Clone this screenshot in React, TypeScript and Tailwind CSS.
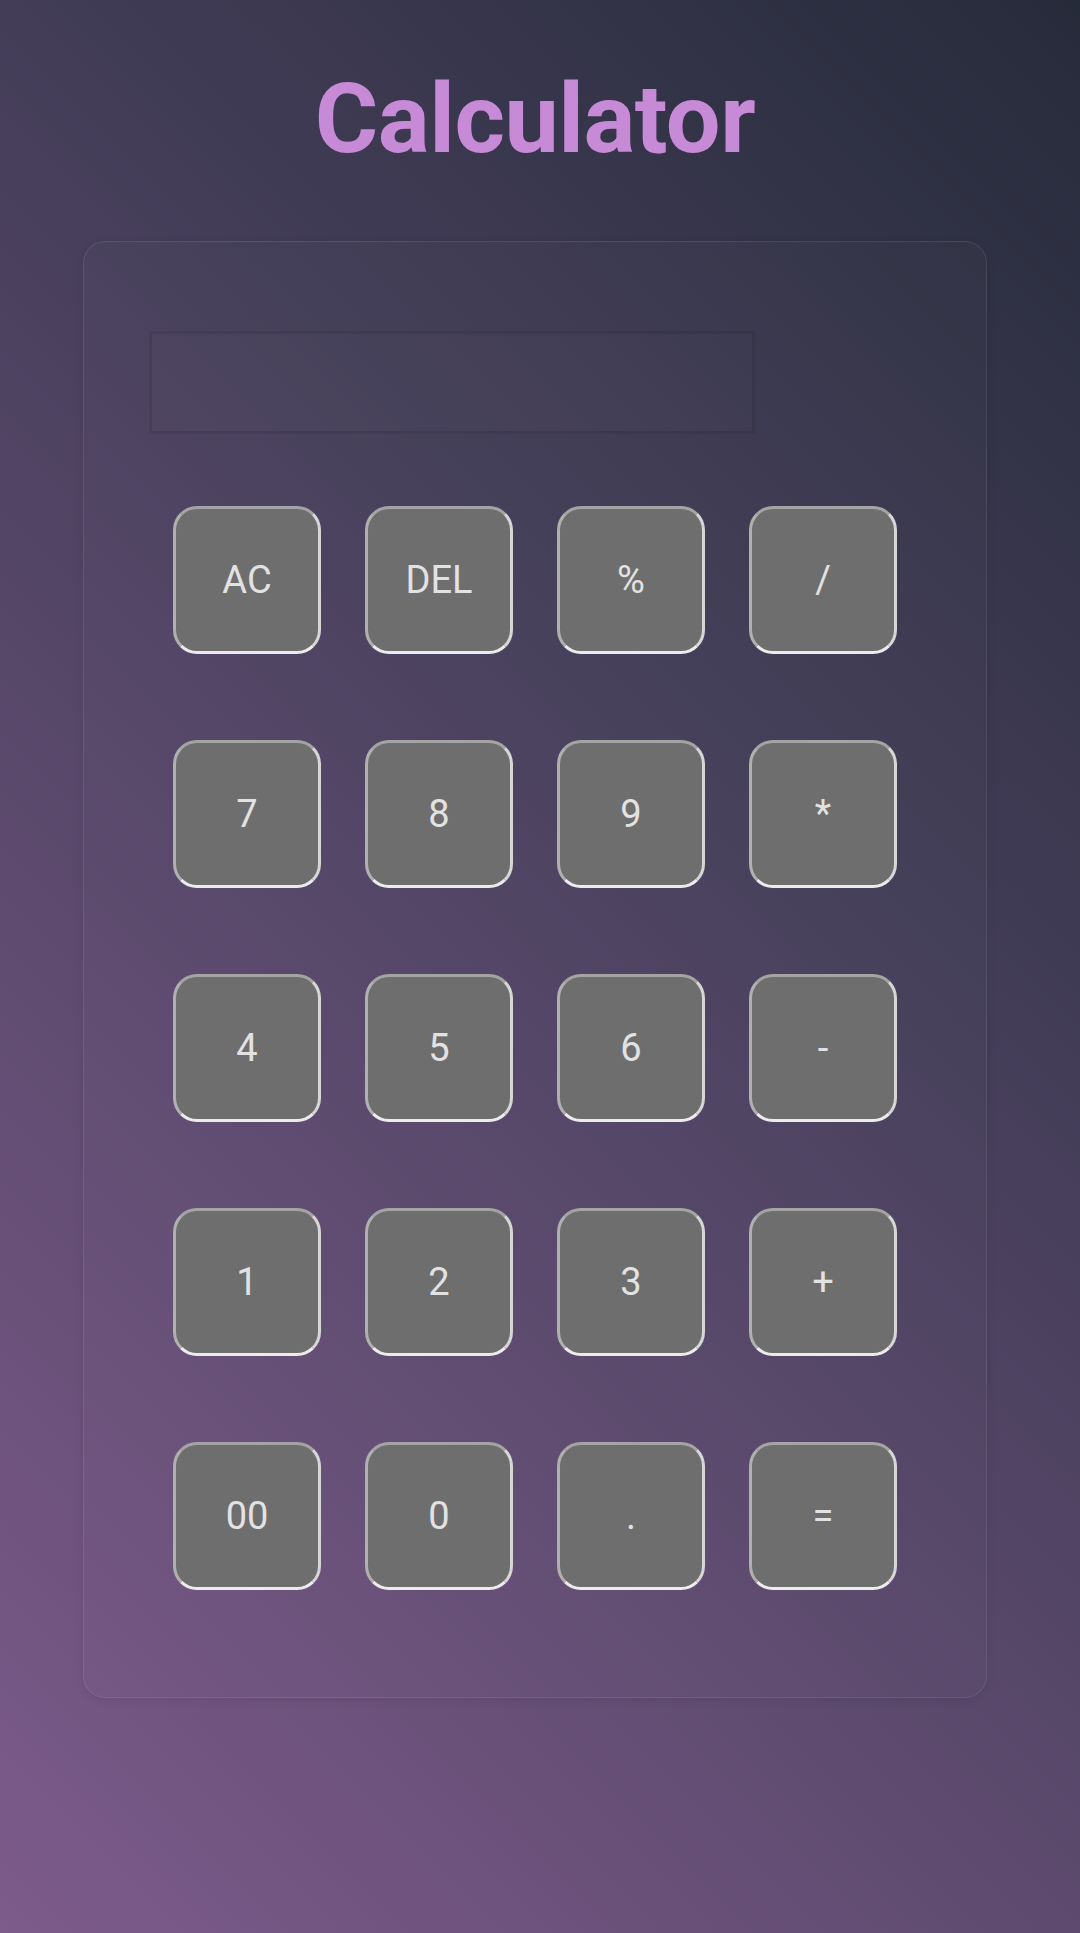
import React from 'react';

const keys = [
  'AC', 'DEL', '%', '/',
  '7', '8', '9', '*',
  '4', '5', '6', '-',
  '1', '2', '3', '+',
  '00', '0', '.', '=',
];

export default function App() {
  const [display, setDisplay] = React.useState('');

  const press = (k: string) => {
    if (k === 'AC') return setDisplay('');
    if (k === 'DEL') return setDisplay((d) => d.slice(0, -1));
    if (k === '=') {
      try {
        // eslint-disable-next-line no-new-func
        const res = Function(`return (${display || '0'})`)();
        setDisplay(String(res));
      } catch {
        setDisplay('Error');
      }
      return;
    }
    setDisplay((d) => d + k);
  };

  return (
    <div
      className="min-h-[1933px] w-full flex flex-col items-center pt-[71px] pr-[10px] bg-[linear-gradient(45deg,#7d5b8b_0%,#5d4a6e_36%,#433d58_64%,#262b3a_100%)]"
      style={{ fontFamily: 'Roboto, "Liberation Sans", sans-serif' }}
    >
      <h1 className="text-[97px] font-bold leading-none text-[#c78ad7] tracking-[-0.5px]">
        Calculator
      </h1>

      <div className="mt-[73px] w-[904px] h-[1457px] rounded-[22px] border border-white/[0.09] bg-white/[0.015] shadow-[0_2px_10px_rgba(0,0,0,0.08)] pt-[89px]">
        <div className="ml-[65px] w-[606px] h-[103px] border-[3px] border-black/[0.09] bg-white/[0.01] flex items-center justify-end px-4 text-[44px] text-[#e6e6e6] overflow-hidden">
          {display}
        </div>

        <div className="mt-[72px] ml-[89px] grid grid-cols-[repeat(4,148px)] gap-x-[44px] gap-y-[86px]">
          {keys.map((k) => (
            <button
              key={k}
              onClick={() => press(k)}
              className="w-[148px] h-[148px] rounded-[24px] bg-[#6e6e6e] border-[3px] border-t-[#a4a4a4] border-l-[#b0b0b0] border-r-[#d6d6d6] border-b-[#ececec] flex items-center justify-center text-[38px] text-[#e2e2e2] leading-none"
            >
              {k}
            </button>
          ))}
        </div>
      </div>
    </div>
  );
}
